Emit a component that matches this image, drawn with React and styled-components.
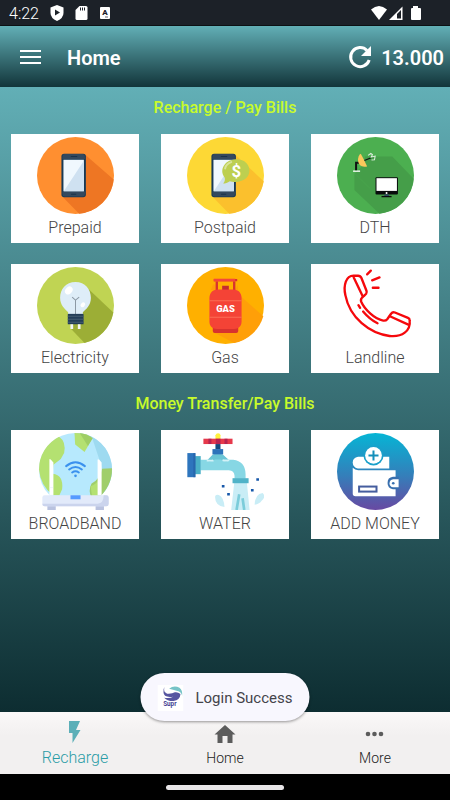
import React from "react";
import styled, { createGlobalStyle } from "styled-components";

const GlobalStyle = createGlobalStyle`
  *, *::before, *::after { box-sizing: border-box; }
  body { margin: 0; font-family: Roboto, "Noto Sans", sans-serif; }
  button { font: inherit; border: 0; padding: 0; cursor: pointer; }
`;

const Screen = styled.div`
  display: flex;
  flex-direction: column;
  min-height: 100vh;
  background: #000;
`;

const StatusBar = styled.div`
  display: flex;
  align-items: center;
  justify-content: space-between;
  height: 26px;
  padding: 0 25px 0 9px;
  background: #1c2128;
  border-bottom: 1px solid #0c1114;
  color: #fff;
`;

const StatusGroup = styled.div`
  display: flex;
  align-items: center;
  gap: ${(p) => p.$gap}px;
`;

const Clock = styled.span`
  font-size: 16px;
  line-height: 24px;
  padding-top: 2px;
  font-weight: 300;
`;

const StatusIcon = styled.svg`
  display: block;
  width: ${(p) => p.$w}px;
  height: 16px;
`;

const Header = styled.header`
  display: flex;
  align-items: center;
  height: 61px;
  padding: 0 6px 0 18px;
  background: linear-gradient(#62afb6, #12353a);
  color: #fff;
`;

const IconButton = styled.button`
  display: flex;
  background: none;
  color: #fff;

  svg { display: block; }
`;

const PageTitle = styled.h1`
  flex: 1;
  margin: 0 0 0 24px;
  font-size: 20px;
  line-height: 24px;
  padding-top: 2px;
  font-weight: 600;
`;

const Balance = styled.span`
  margin-left: 8px;
  font-size: 20px;
  line-height: 24px;
  padding-top: 2px;
  font-weight: 600;
`;

const Main = styled.main`
  flex: 1;
  padding: 11px 11px 60px;
  background: linear-gradient(#62afb6, #0d2d31);
`;

const SectionTitle = styled.h2`
  margin: 0 0 16px;
  font-size: 16px;
  line-height: 20px;
  font-weight: 500;
  text-align: center;
  color: #c8fb2b;
`;

const Grid = styled.div`
  display: grid;
  grid-template-columns: repeat(3, 1fr);
  gap: 21px 22px;
  margin-bottom: 21px;
`;

const Card = styled.button`
  display: flex;
  flex-direction: column;
  align-items: center;
  height: 109px;
  padding-top: 3px;
  background: #fff;
  color: #444;
`;

const CardIcon = styled.svg`
  display: block;
  width: 77px;
  height: 77px;
  flex: none;
`;

const CardLabel = styled.span`
  margin-top: 4px;
  font-size: 16px;
  line-height: 20px;
  font-weight: 300;
`;

const BottomNav = styled.nav`
  position: relative;
  display: grid;
  grid-template-columns: repeat(3, 1fr);
  height: 62px;
  background: linear-gradient(#faf8f8, #f2f0f0 24px);
`;

const NavItem = styled.button`
  display: flex;
  flex-direction: column;
  align-items: center;
  justify-content: flex-start;
  padding-top: 8px;
  background: none;
  color: ${(p) => (p.$active ? "#2b9ca6" : "#222")};
  font-size: ${(p) => (p.$active ? 16 : 14)}px;
  font-weight: 300;
  line-height: 20px;

  svg {
    display: block;
    width: 28px;
    height: 28px;
    flex: none;
    color: ${(p) => (p.$active ? "#5cafb8" : "#5c5c5c")};
  }
`;

const Toast = styled.div`
  position: absolute;
  bottom: 53px;
  left: 50%;
  transform: translateX(-50%);
  display: flex;
  align-items: center;
  gap: 12px;
  height: 48px;
  padding: 2px 17px 0;
  border-radius: 24px;
  background: #f8f7fe;
  box-shadow: 0 1px 3px rgba(0, 0, 0, 0.4);
  color: #44444a;
  font-size: 15px;
  line-height: 20px;
  white-space: nowrap;

  svg { display: block; width: 26px; height: 26px; }
`;

const GestureBar = styled.div`
  display: flex;
  align-items: center;
  justify-content: center;
  height: 26px;
  background: #000;
`;

const Handle = styled.div`
  width: 118px;
  height: 5px;
  border-radius: 3px;
  background: #e8e6e8;
`;

const Phone = () => (
  <>
    <rect x="183" y="86" width="73" height="130" rx="8" fill="#193a55" />
    <path d="M186 102V94q0-7 7-7h53q7 0 7 7v8zM186 199h67v8q0 7-7 7h-53q-7 0-7-7z" fill="#34495e" />
    <rect x="189" y="104" width="61" height="94" fill="#f0f8fe" />
    <path d="M250 107v91h-60z" fill="#cfe1f1" />
    <path d="M212 94h17M213 207h13" stroke="#1a334a" strokeWidth="3" strokeLinecap="round" />
  </>
);

const Prepaid = () => (
  <CardIcon viewBox="110 36 230 230" aria-hidden="true">
    <circle cx="225" cy="151" r="115" fill="#ff8f30" />
    <path d="M254 89L339 163A115 115 0 0 1 236 265L187 215z" fill="#ee7623" />
    <Phone />
  </CardIcon>
);

const Postpaid = () => (
  <CardIcon viewBox="110 36 230 230" aria-hidden="true">
    <circle cx="225" cy="151" r="115" fill="#fdd835" />
    <path d="M254 89L339 168A115 115 0 0 1 236 265L187 215z" fill="#fbc02d" />
    <Phone />
    <path d="M218 175q8-10 4-19c-9-10-8-25-2-34 14-23 52-25 67-8 19 20 7 48-14 53-15 6-29 3-35 1-7 5-13 7-20 7z" fill="#bdcf50" />
    <path d="M224 130q2-13 18-19" fill="none" stroke="#d9e49a" strokeWidth="6" strokeLinecap="round" />
    <text x="257" y="155" fill="#fff" textAnchor="middle" fontSize="50" fontWeight="700">$</text>
  </CardIcon>
);

const Dth = () => (
  <CardIcon viewBox="110 36 230 230" aria-hidden="true">
    <circle cx="225" cy="151" r="115" fill="#4caf50" />
    <path d="M194 94h81l64 67A115 115 0 0 1 237 265l-75-71v-48l24-24z" fill="#459e49" />
    <path d="M164 146l44 43" stroke="#4caf50" strokeWidth="1" />
    <path d="M158 138h21" stroke="#fff" strokeWidth="4" />
    <path d="M167 135v-22h10" fill="none" stroke="#111" strokeWidth="6" />
    <path d="M181 86q9 16 19 38-24 5-27-16-1-17 8-22z" fill="#fbc75b" />
    <path d="M192 106l20-8" stroke="#111" strokeWidth="3" />
    <path d="M203 91l8-6 5 4-4 7 12-3-2 11-9 1" fill="none" stroke="#deefdf" strokeWidth="3" />
    <rect x="225" y="156" width="67" height="52" rx="3" fill="#080b0c" />
    <rect x="228" y="159" width="61" height="38" fill="#fff" />
    <circle cx="258" cy="203" r="3" fill="#fff" />
    <path d="M252 208h13l1 5h-15z" fill="#334a6b" />
    <path d="M243 214h30" stroke="#080b0c" strokeWidth="4" />
  </CardIcon>
);

const Electricity = () => (
  <CardIcon viewBox="110 37 230 230" aria-hidden="true">
    <circle cx="225" cy="152" r="115" fill="#c0d453" />
    <path d="M259 98L338 173A115 115 0 0 1 252 264l-40-42V175z" fill="#9cae36" />
    <path d="M225 82c29 0 46 22 46 47 0 24-15 34-24 43v7h-44v-7c-9-9-24-20-24-43 0-25 17-47 46-47z" fill="#deedf8" />
    <path d="M225 178v-43m0 1-10-9m10 9 11-9" fill="none" stroke="#8c99a5" strokeWidth="3" />
    <ellipse cx="205" cy="107" rx="10" ry="13" fill="#fff" transform="rotate(42 205 107)" />
    <ellipse cx="247" cy="150" rx="6" ry="8" fill="#fff" transform="rotate(42 247 150)" />
    <rect x="202" y="177" width="47" height="31" fill="#233e59" />
    <path d="M202 184h47M202 193h47M202 202h47" stroke="#465d72" strokeWidth="3" />
    <path d="M214 208v14M236 208v14" stroke="#f4f7f7" strokeWidth="8" />
  </CardIcon>
);

const Gas = () => (
  <CardIcon viewBox="110 37 230 230" aria-hidden="true">
    <circle cx="225" cy="152" r="115" fill="#ffb000" />
    <path d="M272 126l66 58A115 115 0 0 1 251 264l-62-32z" fill="#ff9f08" />
    <path d="M188 89h8v17h-15zM262 89v17h-8z" fill="#ff9f08" />
    <path d="M190 76h70M199 80v26M251 80v26" fill="none" stroke="#d8322e" strokeWidth="7" />
    <path d="M215 93h20v14h-20z" fill="#c52c30" />
    <path d="M190 76h64" stroke="#f4473b" strokeWidth="8" />
    <rect x="187" y="210" width="76" height="24" rx="6" fill="#d8322e" />
    <path d="M202 104h46c17 0 25 12 25 26v70c0 15-10 22-22 22h-52c-13 0-22-7-22-22v-70c0-14 8-26 25-26z" fill="#f44336" />
    <path d="M177 138h96M177 187h96" stroke="#fa6d55" strokeWidth="3" />
    <text x="225" y="171" fill="#fff" textAnchor="middle" fontSize="28" fontWeight="900">GAS</text>
  </CardIcon>
);

const Landline = () => (
  <CardIcon viewBox="110 37 230 230" aria-hidden="true">
    <g fill="none" stroke="#f5080c" strokeWidth="7" strokeLinecap="round" strokeLinejoin="round">
      <path d="M164 63c-29-4-35 32-29 58 13 68 73 115 132 122 37 4 64-15 60-47q0-5-5-7l-39-16q-7-3-11 3l-12 17q-4 5-12 4c-26-4-56-34-66-57-3-8 2-12 8-16l7-7q3-4 1-9l-15-38q-3-7-10-7h-9q-6 0-4 5l26 55" />
      <path d="M268 184l55 25M188 170q20 24 43 35M174 151l5 8M200 59l11-11M215 77l22-9M217 99h17" />
    </g>
  </CardIcon>
);

const Broadband = () => (
  <CardIcon viewBox="110 39 230 230" aria-hidden="true">
    <circle cx="225" cy="148" r="109" fill="#b7e9fd" />
    <path d="M222 39A109 109 0 0 1 288 237l17-93-29-86z" fill="#9edaf0" />
    <path d="M116 148A109 109 0 0 1 176 50q22 15 15 49l-10 18-22 17-2 27q33 4 28 46l-8 18h-19A109 109 0 0 1 116 148z" fill="#b4e171" />
    <path d="M222 39q33 0 54 16l-24 41-28-23z" fill="#b4e171" />
    <path d="M238 40q23 2 38 15l-14 23z" fill="#9fce65" />
    <path d="M334 144A109 109 0 0 1 290 235h-17q-11-25 0-45 27-14 31-44z" fill="#a0ce6b" />
    <path d="M270 198q19-7 22-17v50h-17z" fill="#b4e171" />
    <path d="M147 225V119q0-4 4-1l8 9v98zM291 225V120q0-5 5-1l7 8v98z" fill="#fff" />
    <path d="M148 202h10M148 225h10M292 225h10" stroke="#e8f1fb" strokeWidth="2" />
    <rect x="141" y="252" width="25" height="18" fill="#b9c2df" />
    <rect x="285" y="252" width="25" height="18" fill="#b9c2df" />
    <rect x="126" y="225" width="198" height="33" rx="7" fill="#e2eafa" />
    <path d="M309 225h8q7 0 7 7v19q0 7-7 7H133q-7 0-7-7v-1h165q18 0 18-25z" fill="#cbd4ed" />
    <path d="M210 225h30v12h-30z" fill="#559aff" />
    <g fill="none" stroke="#3b91ee" strokeWidth="6" strokeLinecap="round">
      <path d="M197 138q28-23 56 0M206 148q19-15 38 0M215 157q10-7 20 0" />
    </g>
    <circle cx="225" cy="167" r="4" fill="#3b91ee" />
  </CardIcon>
);

const Water = () => (
  <CardIcon viewBox="110 39 230 230" aria-hidden="true">
    <path d="M251 188h38l8 81h-55z" fill="#c9edf6" />
    <path d="M266 222l-8 47M276 234l5 35" stroke="#7bccda" strokeWidth="8" />
    <path d="M150 119h24l18-17h20l22 17h14q36 4 37 43v14h-33v-9q-1-16-17-17h-85z" fill="#87d7e4" />
    <path d="M172 119l15-16h30l17 16-5 5q-14-1-17-6h-18q-9 5-18 6z" fill="#6bc5d5" />
    <path d="M169 121q18 1 20 0M216 120q10 3 20 0" fill="none" stroke="#d2f2f7" strokeWidth="6" />
    <rect x="134" y="108" width="17" height="54" fill="#4ab0c7" />
    <rect x="111" y="99" width="24" height="72" fill="#2e75bd" />
    <path d="M129 99h6v72h-6z" fill="#2867ad" />
    <rect x="246" y="174" width="48" height="15" fill="#50b3c8" />
    <rect x="186" y="87" width="32" height="16" fill="#2d73ba" />
    <rect x="195" y="72" width="15" height="15" fill="#144a7d" />
    <path d="M195 57V46q2-6 8-6t7 6v11z" fill="#fff13c" />
    <rect x="159" y="56" width="87" height="16" fill="#e6394b" />
    <path d="M174 56h9v16h-9zM196 56h14v16h-14zM222 56h9v16h-9z" fill="#b62350" />
    <path d="M222 260q-29-4-28-31 1-8 11-5 15 6 17 36zM312 253q1-32 24-35 11 12-3 23-6 9-21 12z" fill="#c9edf6" />
    <path d="M214 194h8v8h-8zM230 218h8v8h-8zM301 206h8v8h-8zM317 174h8v8h-8z" fill="#1758aa" />
  </CardIcon>
);

const AddMoney = () => (
  <CardIcon viewBox="110 39 230 230" aria-hidden="true">
    <defs>
      <linearGradient id="walletFill" x1="0" y1="0" x2="0" y2="1">
        <stop offset="0" stopColor="#06b5d5" />
        <stop offset="0.55" stopColor="#347fba" />
        <stop offset="1" stopColor="#6849a2" />
      </linearGradient>
    </defs>
    <circle cx="225" cy="154" r="115" fill="url(#walletFill)" />
    <path d="M266 110v35h-94q-15-4-15-18t16-17z" fill="#fff" />
    <circle cx="219" cy="106" r="30" fill="#1ba0ca" />
    <circle cx="219" cy="106" r="25" fill="#fff" />
    <path d="M204 106h30M219 91v30" stroke="#148fba" strokeWidth="6" />
    <path d="M157 143q7 7 16 7h112v78H165q-8 0-8-8z" fill="#fff" />
    <path d="M294 170h-17q-16 2-16 18t16 19h17z" fill="#386fae" />
    <path d="M294 177h-16q-11 1-11 12t11 12h16z" fill="#fff" />
    <circle cx="278" cy="189" r="4" fill="#386fae" />
    <rect x="176" y="199" width="52" height="15" fill="#fff" stroke="#455d9e" strokeWidth="6" />
  </CardIcon>
);

const sections = [
  {
    title: "Recharge / Pay Bills",
    items: [
      ["Prepaid", Prepaid],
      ["Postpaid", Postpaid],
      ["DTH", Dth],
      ["Electricity", Electricity],
      ["Gas", Gas],
      ["Landline", Landline],
    ],
  },
  {
    title: "Money Transfer/Pay Bills",
    items: [
      ["BROADBAND", Broadband],
      ["WATER", Water],
      ["ADD MONEY", AddMoney],
    ],
  },
];

export default function App() {
  return (
    <Screen>
      <GlobalStyle />
      <StatusBar>
        <StatusGroup $gap={11}>
          <Clock>4:22</Clock>
          <StatusIcon $w={14} viewBox="0 0 14 16" aria-hidden="true">
            <path d="M7 0l6.500 2.500V8q0 5-6.500 8Q.5 13 .5 8V2.500z" fill="#fff" />
            <path d="M5 4.500v6L10 7.500z" fill="#1c2128" />
          </StatusIcon>
          <StatusIcon $w={13} viewBox="0 0 13 16" aria-hidden="true">
            <path d="M4.500 1H11q1.500 0 1.500 1.500v11Q12.500 15 11 15H2Q.5 15 .5 13.500V5z" fill="#fff" />
            <path d="M5.500 2.500v3M7.500 2.500v3M9.500 2.500v3" stroke="#1c2128" />
          </StatusIcon>
          <StatusIcon $w={12} viewBox="0 0 12 16" aria-hidden="true">
            <rect x="1" y="2" width="10" height="12" rx="1" fill="#fff" />
            <text x="6" y="10" fontSize="8" fontWeight="900" textAnchor="middle" fill="#1c2128">A</text>
            <path d="M6 12h3" stroke="#667" />
          </StatusIcon>
        </StatusGroup>
        <StatusGroup $gap={1}>
          <StatusIcon $w={16} viewBox="0 0 16 16" aria-hidden="true">
            <path d="M0 4.500q8-7 16 0L8 15z" fill="#fff" />
          </StatusIcon>
          <StatusIcon $w={16} viewBox="0 0 16 16" aria-hidden="true">
            <path d="M1 15L14.500 1.500V15z" fill="#fff" />
            <path d="M9 9l4-4v8.500H9z" fill="#1c2128" />
          </StatusIcon>
          <StatusIcon $w={20} viewBox="0 0 20 16" aria-hidden="true">
            <path d="M8 1h5v2h2q1 0 1 1v10q0 1-1 1H7q-1 0-1-1V4q0-1 1-1h1z" fill="#fff" />
          </StatusIcon>
        </StatusGroup>
      </StatusBar>

      <Header>
        <IconButton type="button" aria-label="Menu">
          <svg width="25" height="18" viewBox="0 0 25 18">
            <path d="M2 3h21M2 9h21M2 15h21" stroke="currentColor" strokeWidth="2" />
          </svg>
        </IconButton>
        <PageTitle>Home</PageTitle>
        <IconButton type="button" aria-label="Refresh balance">
          <svg width="26" height="26" viewBox="0 0 26 26">
            <path d="M20 6.500A9.500 9.500 0 1 0 22.200 16" fill="none" stroke="currentColor" strokeWidth="3" />
            <path d="M24 2v10H14z" fill="currentColor" />
          </svg>
        </IconButton>
        <Balance>13.000</Balance>
      </Header>

      <Main>
        {sections.map(({ title, items }) => (
          <section key={title}>
            <SectionTitle>{title}</SectionTitle>
            <Grid>
              {items.map(([label, Icon]) => (
                <Card type="button" key={label}>
                  <Icon />
                  <CardLabel>{label}</CardLabel>
                </Card>
              ))}
            </Grid>
          </section>
        ))}
      </Main>

      <BottomNav>
        <NavItem type="button" $active aria-current="page">
          <svg viewBox="0 0 28 28" aria-hidden="true">
            <path d="M8 1h11l-4 9h4.500L11.500 23v-10H8z" fill="currentColor" />
          </svg>
          <span>Recharge</span>
        </NavItem>
        <NavItem type="button">
          <svg viewBox="0 0 28 28" aria-hidden="true">
            <path d="M14 5l10.500 9.500h-3V23h-5v-7h-5v7h-5v-8.500h-3z" fill="currentColor" />
          </svg>
          <span>Home</span>
        </NavItem>
        <NavItem type="button">
          <svg viewBox="0 0 28 28" aria-hidden="true">
            <g fill="currentColor">
              <circle cx="7" cy="14" r="2.300" />
              <circle cx="13.500" cy="14" r="2.300" />
              <circle cx="20" cy="14" r="2.300" />
            </g>
          </svg>
          <span>More</span>
        </NavItem>
        <Toast role="status">
          <svg viewBox="0 0 78 78" aria-hidden="true">
            <rect width="78" height="78" fill="#fff" />
            <path d="M21 6q-5 15 8 20 15 1 23-4 8-2 17 5-1 18-21 21-17 1-28-10 17 3 27-3-29 4-29-13-1-11 3-16z" fill="#5655a0" />
            <path d="M35 11q14-11 31-3 10 8 8 24-3-13-17-15-10-3-22-6z" fill="#76c3c7" />
            <text x="37" y="62" fontSize="19" fontWeight="700" textAnchor="middle" fill="#3f3d91">Supr</text>
          </svg>
          <span>Login Success</span>
        </Toast>
      </BottomNav>

      <GestureBar>
        <Handle />
      </GestureBar>
    </Screen>
  );
}
